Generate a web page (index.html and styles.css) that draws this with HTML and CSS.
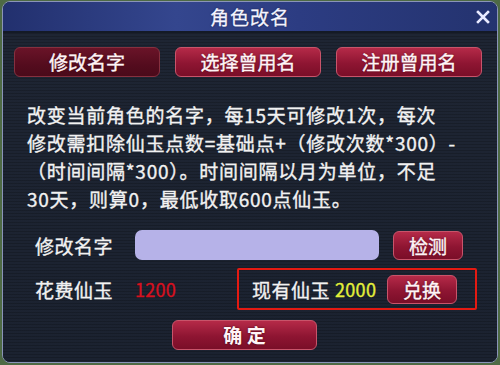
FILE: index.html
```html
<!DOCTYPE html>
<html lang="zh-CN">
<head>
    <meta charset="UTF-8">
    <meta name="viewport" content="width=device-width, initial-scale=1.0">
    <title>角色改名</title>
    <link rel="stylesheet" href="styles.css">
</head>
<body>
    <div class="dialog">
        <div class="titlebar">
            <span class="title">角色改名</span>
            <svg class="close" width="14" height="14" viewBox="0 0 14 14">
                <path d="M2 2 L12 12 M12 2 L2 12" stroke="#e8eaff" stroke-width="2.6" stroke-linecap="square"/>
            </svg>
        </div>
        <div class="content">
            <div class="tabs">
                <button class="btn tab active">修改名字</button>
                <button class="btn tab">选择曾用名</button>
                <button class="btn tab">注册曾用名</button>
            </div>

            <p class="desc">改变当前角色的名字，每15天可修改1次，每次<br>修改需扣除仙玉点数=基础点+（修改次数*300）-<br>（时间间隔*300）。时间间隔以月为单位，不足<br>30天，则算0，最低收取600点仙玉。</p>

            <div class="row">
                <span class="label">修改名字</span>
                <input class="name-input" type="text">
                <button class="btn small">检测</button>
            </div>

            <div class="row">
                <span class="label">花费仙玉</span>
                <span class="cost">1200</span>
                <div class="balance">
                    <span class="label-sm">现有仙玉</span>
                    <span class="amount">2000</span>
                    <button class="btn small">兑换</button>
                </div>
            </div>

            <div class="footer">
                <button class="btn confirm">确&nbsp;定</button>
            </div>
        </div>
    </div>
</body>
</html>
```

FILE: styles.css
```css
body {
    margin: 0;
    background-color: #4e6a44;
    font-family: "Noto Sans CJK SC", "Noto Sans", sans-serif;
    color: #f2f2f2;
}

.dialog {
    width: 494px;
    height: 360px;
    margin: 1px 2px 0 2px;
    border: 1px solid #8a94b8;
    border-radius: 8px;
    overflow: hidden;
    background-color: #1a202c;
}

.titlebar {
    height: 29px;
    display: flex;
    justify-content: center;
    align-items: center;
    position: relative;
    background: linear-gradient(90deg, #22306e 0%, #34468e 35%, #2c3c82 60%, #24336f 100%);
    border-bottom: 2px solid #141a26;
}

.title {
    font-size: 19px;
    color: #f4f4ff;
    text-shadow: 0 0 2px #0c1030;
    letter-spacing: 1px;
    -webkit-text-stroke: 0.3px #f4f4ff;
}

.close {
    position: absolute;
    right: 7px;
    top: 8px;
}

.content {
    height: 329px;
    padding-top: 14px;
    box-sizing: border-box;
    background:
        repeating-linear-gradient(180deg, rgba(0, 0, 0, 0.18) 0px, rgba(0, 0, 0, 0.18) 1px, transparent 1px, transparent 3px),
        linear-gradient(180deg, #1e2533 0%, #1b2230 100%);
    -webkit-text-stroke: 0.35px currentColor;
}

.btn {
    font-family: "Noto Sans CJK SC", "Noto Sans", sans-serif;
    color: #fff4f6;
    border: 1px solid #c8546a;
    border-radius: 6px;
    background: linear-gradient(180deg, #b52a48 0%, #8e1532 55%, #7a0e28 100%);
    text-shadow: 0 0 2px #40000e;
    -webkit-text-stroke: 0.4px #fff4f6;
    padding: 0;
    cursor: pointer;
}

.tabs {
    display: flex;
    gap: 15px;
    padding-left: 11px;
}

.tab {
    width: 146px;
    height: 30px;
    font-size: 19px;
    line-height: 28px;
}

.tab.active {
    background: linear-gradient(180deg, #6a1428 0%, #540c1e 60%, #4a0a1a 100%);
    border-color: #86303f;
}

.desc {
    margin: 24px 0 0 0;
    padding-left: 24px;
    font-size: 19px;
    line-height: 28px;
    letter-spacing: 0.75px;
}

.row {
    display: flex;
    align-items: center;
    padding-left: 32px;
    margin-top: 17px;
}

.row + .row {
    margin-top: 8px;
}

.label {
    width: 100px;
    font-size: 19px;
    letter-spacing: 0.5px;
}

.name-input {
    width: 244px;
    height: 30px;
    box-sizing: border-box;
    border: none;
    border-radius: 7px;
    background-color: #b6b2e8;
    margin-right: 14px;
}

.small {
    width: 70px;
    height: 29px;
    font-size: 19px;
    line-height: 27px;
}

.cost {
    width: 102px;
    font-size: 18px;
    color: #d8101e;
    letter-spacing: 0.3px;
}

.balance {
    display: flex;
    align-items: center;
    width: 240px;
    height: 42px;
    box-sizing: border-box;
    border: 2px solid #e41a12;
    border-radius: 2px;
    padding-left: 13px;
}

.label-sm {
    font-size: 19px;
    margin-right: 5px;
    letter-spacing: 0.5px;
}

.amount {
    font-size: 18px;
    color: #e4f03a;
    width: 52px;
    letter-spacing: 0.3px;
}

.footer {
    padding-left: 169px;
    margin-top: 10px;
}

.confirm {
    width: 145px;
    height: 30px;
    font-size: 19px;
    line-height: 28px;
    font-weight: bold;
    -webkit-text-stroke: 0;
}
```
